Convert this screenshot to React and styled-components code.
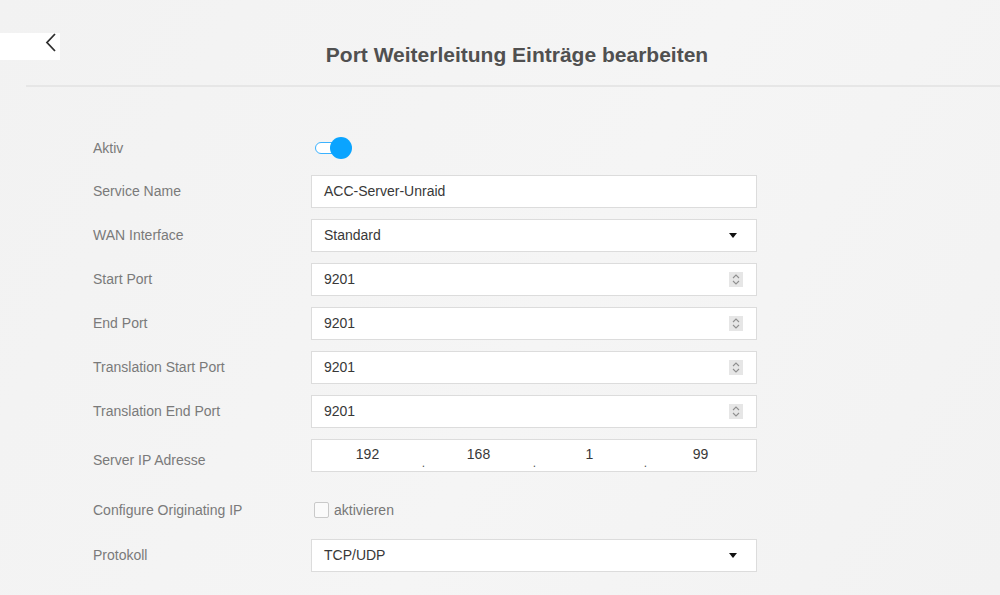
import React from "react";
import styled, { createGlobalStyle } from "styled-components";

const GlobalStyle = createGlobalStyle`
  html, body {
    margin: 0;
    padding: 0;
    background: #f2f2f2;
    font-family: "Liberation Sans", Arial, sans-serif;
  }
`;

const Page = styled.div`
  width: 1000px;
  height: 595px;
  overflow: hidden;
  background: linear-gradient(120deg, #f2f2f2 0%, #f5f5f5 55%, #f2f2f2 100%);
`;

const Header = styled.div`
  position: relative;
  height: 85px;
  display: flex;
  align-items: flex-start;
  justify-content: center;
  padding-left: 34px;
  box-sizing: border-box;
`;

const BackBox = styled.div`
  position: absolute;
  left: 0;
  top: 33px;
  width: 60px;
  height: 27px;
  background: #fff;
  svg {
    position: absolute;
    left: 45px;
    top: 0;
  }
`;

const Title = styled.h1`
  margin: 0;
  padding-top: 43px;
  font-size: 21px;
  font-weight: 700;
  color: #505050;
  line-height: 24px;
`;

const Divider = styled.div`
  margin-left: 26px;
  height: 2px;
  background: #e6e6e6;
`;

const Form = styled.div`
  padding: 40px 0 0 93px;
`;

const Row = styled.div`
  display: flex;
  align-items: center;
  height: ${(p) => p.$h || 44}px;
  padding-top: ${(p) => p.$pt || 0}px;
  box-sizing: border-box;
`;

const Label = styled.div`
  width: 218px;
  font-size: 14px;
  color: #7a7a7a;
  padding-top: ${(p) => p.$offset || 0}px;
`;

const Field = styled.div`
  width: 446px;
  height: 33px;
  box-sizing: border-box;
  border: 1px solid #dcdcdc;
  background: #fff;
  display: flex;
  align-items: center;
  padding: 0 12px;
  font-size: 14px;
  color: #383838;
`;

const Value = styled.span`
  flex: 1;
`;

const Toggle = styled.div`
  position: relative;
  width: 37px;
  height: 22px;
  margin-left: 4px;
  &::before {
    content: "";
    position: absolute;
    left: 0;
    top: 5px;
    width: 26px;
    height: 12px;
    box-sizing: border-box;
    border: 1.5px solid #3bb2ff;
    border-radius: 6px;
    background: #fff;
  }
  &::after {
    content: "";
    position: absolute;
    left: 15px;
    top: 0;
    width: 22px;
    height: 22px;
    border-radius: 50%;
    background: #0aa4ff;
  }
`;

const Spinner = styled.div`
  width: 14px;
  height: 15px;
  background: #e6e6e6;
  display: flex;
  align-items: center;
  justify-content: center;
  margin-right: 1px;
`;

const Caret = styled.div`
  width: 0;
  height: 0;
  border-left: 4px solid transparent;
  border-right: 4px solid transparent;
  border-top: 5px solid #111;
  margin-right: 7px;
`;

const IpField = styled(Field)`
  padding: 0;
`;

const Octet = styled.div`
  flex: 1;
  text-align: center;
  position: relative;
  margin-top: -3px;
  &:not(:last-child)::after {
    content: ".";
    position: absolute;
    right: -2px;
    top: 10px;
    font-size: 12px;
    color: #555;
  }
`;

const CheckWrap = styled.label`
  display: flex;
  align-items: center;
  gap: 5px;
  margin-left: 3px;
  font-size: 14px;
  color: #777;
`;

const Box = styled.span`
  width: 15px;
  height: 16px;
  box-sizing: border-box;
  border: 1px solid #c9c9c9;
  border-radius: 2px;
  background: #fafafa;
`;

const SpinIcon = () => (
  <svg width="10" height="13" viewBox="0 0 10 13" fill="none" stroke="#8f8f8f" strokeWidth="1.1">
    <path d="M2 5 L5 2 L8 5" />
    <path d="M2 8 L5 11 L8 8" />
  </svg>
);

const NumberField = ({ value }) => (
  <Field>
    <Value>{value}</Value>
    <Spinner>
      <SpinIcon />
    </Spinner>
  </Field>
);

const SelectField = ({ value }) => (
  <Field>
    <Value>{value}</Value>
    <Caret />
  </Field>
);

export default function App() {
  return (
    <Page>
      <GlobalStyle />
      <Header>
        <BackBox>
          <svg width="12" height="19" viewBox="0 0 12 19" fill="none" stroke="#2e2e2e" strokeWidth="1.8">
            <path d="M10 1 L2 9.5 L10 18" />
          </svg>
        </BackBox>
        <Title>Port Weiterleitung Einträge bearbeiten</Title>
      </Header>
      <Divider />
      <Form>
        <Row $h={42}>
          <Label>Aktiv</Label>
          <Toggle />
        </Row>
        <Row>
          <Label>Service Name</Label>
          <Field>ACC-Server-Unraid</Field>
        </Row>
        <Row>
          <Label>WAN Interface</Label>
          <SelectField value="Standard" />
        </Row>
        <Row>
          <Label>Start Port</Label>
          <NumberField value="9201" />
        </Row>
        <Row>
          <Label>End Port</Label>
          <NumberField value="9201" />
        </Row>
        <Row>
          <Label>Translation Start Port</Label>
          <NumberField value="9201" />
        </Row>
        <Row>
          <Label>Translation End Port</Label>
          <NumberField value="9201" />
        </Row>
        <Row>
          <Label $offset={9}>Server IP Adresse</Label>
          <IpField>
            <Octet>192</Octet>
            <Octet>168</Octet>
            <Octet>1</Octet>
            <Octet>99</Octet>
          </IpField>
        </Row>
        <Row $h={56} $pt={10}>
          <Label>Configure Originating IP</Label>
          <CheckWrap>
            <Box />
            aktivieren
          </CheckWrap>
        </Row>
        <Row>
          <Label>Protokoll</Label>
          <SelectField value="TCP/UDP" />
        </Row>
      </Form>
    </Page>
  );
}
